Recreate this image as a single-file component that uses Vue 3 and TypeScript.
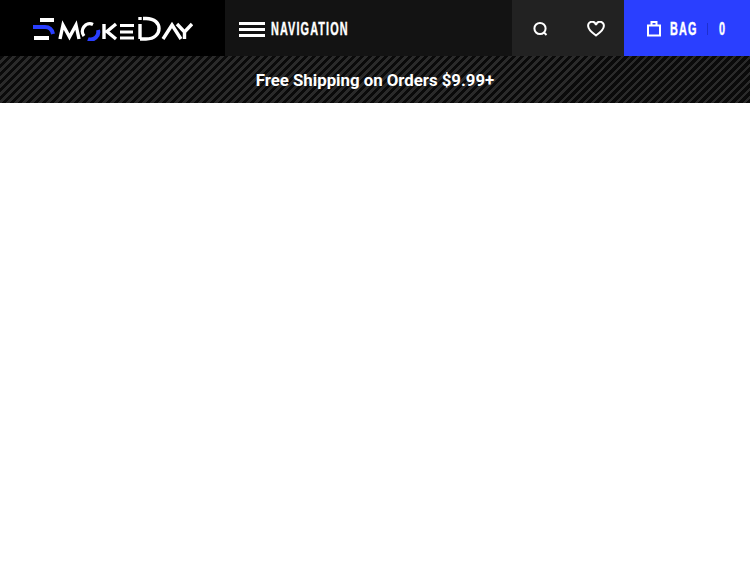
<script setup lang="ts">
const bagCount = 0
</script>

<template>
  <div class="page">
    <header class="topbar">
      <a class="logo" href="#" aria-label="SmokeDay">
        <svg width="160" height="25" viewBox="0 0 160 25" fill="none" stroke="#fff" stroke-width="3.400">
          <path d="M7 4h14" stroke-width="4" />
          <path d="M0 11h12c4 0 7 2 8 7" stroke="#2a3fff" stroke-width="4" />
          <path d="M1 22h15" stroke-width="4" />
          <path d="M27 23l3-14 6.500 12 6.500-12 3 14" />
          <path d="M51 20A7.500 7.500 0 0 1 60 8.500" />
          <path d="M65 14A7.500 7.500 0 0 1 55 23" stroke="#2a3fff" stroke-width="4" />
          <path d="M71 8v15M83 8l-9 7.500 9 7.500" />
          <path d="M87 9.500h14M87 16h13M87 22h14" stroke-width="2.800" />
          <path d="M107 8v15M107 1v3" />
          <path d="M110 2.500h3c9 0 13 5 13 10s-4 10.500-13 10.500h-6" />
          <path d="M130 23l9-14 9 14" />
          <path d="M144 8l7.500 8 7.500-8M151.500 16v7" />
        </svg>
      </a>
      <button class="nav-toggle" type="button">
        <span class="burger"><i></i><i></i><i></i></span>
        <span class="nav-label">NAVIGATION</span>
      </button>
      <div class="icon-group">
        <button class="icon-btn" type="button" aria-label="Search">
          <svg width="16" height="16" viewBox="0 0 16 16" fill="none" stroke="#fff" stroke-width="2">
            <circle cx="8" cy="7.500" r="5.600" />
            <path d="M12 11.500l2.500 2.500" />
          </svg>
        </button>
        <button class="icon-btn" type="button" aria-label="Wishlist">
          <svg width="18" height="16" viewBox="0 0 18 16" fill="none" stroke="#fff" stroke-width="2">
            <path d="M9 14.500C4 11 1.200 8.500 1.200 5.300a3.900 3.900 0 0 1 7.800-1.300 3.900 3.900 0 0 1 7.800 1.300c0 3.200-2.800 5.700-7.800 9.200z" />
          </svg>
        </button>
      </div>
      <button class="bag" type="button">
        <svg class="bag-icon" width="14" height="16" viewBox="0 0 14 16" fill="none" stroke="#fff" stroke-width="2">
          <path d="M1 4.500h12v10H1z" />
          <path d="M4.500 4.500V1h5v3.500" />
        </svg>
        <span class="bag-label">BAG</span>
        <span class="bag-sep"></span>
        <span class="bag-count">{{ bagCount }}</span>
      </button>
    </header>
    <div class="promo">Free Shipping on Orders $9.99+</div>
  </div>
</template>

<style>
html, body { background: #fff; }
</style>

<style scoped>
.page { width: 750px; height: 563px; background: #fff; overflow: hidden; }

.topbar { display: flex; height: 56px; background: #131313; }

.logo {
  width: 225px;
  flex-shrink: 0;
  background: #000;
  display: flex;
  align-items: flex-start;
  padding: 16px 0 0 33px;
  box-sizing: border-box;
}

button {
  border: none;
  margin: 0;
  padding: 0;
  color: #fff;
  background: none;
  cursor: pointer;
}

.nav-toggle {
  flex: 1;
  display: flex;
  align-items: center;
  gap: 6px;
  padding: 2px 0 0 14px;
}

.burger { display: flex; flex-direction: column; gap: 3px; width: 26px; }
.burger i { display: block; height: 3px; background: #fff; }

/* no condensed face installed, so squeeze the bold sans */
.nav-label, .bag-label, .bag-count {
  display: inline-block;
  font-family: "Liberation Sans", sans-serif;
  font-weight: 700;
  font-size: 17.500px;
  line-height: 20px;
  letter-spacing: 1.800px;
  white-space: nowrap;
  -webkit-text-stroke: 0.400px #fff;
  transform: scaleX(0.62);
  transform-origin: left center;
}
.nav-label { width: 78px; }

.icon-group { display: flex; width: 112px; background: #222; }
.icon-btn { width: 56px; display: flex; align-items: center; justify-content: center; padding-top: 2px; }

.bag {
  width: 126px;
  background: #2a3fff;
  display: flex;
  align-items: center;
  padding: 2px 0 0 23px;
  box-sizing: border-box;
}
.bag-icon { flex-shrink: 0; }
.bag-label { margin-left: 9px; width: 26px; }
.bag-sep { width: 1px; height: 12px; background: #1e2fd0; margin: 0 11px; }
.bag-count { width: 8px; }

.promo {
  height: 47px;
  box-sizing: border-box;
  display: flex;
  align-items: center;
  justify-content: center;
  color: #fff;
  font-family: Roboto, sans-serif;
  font-weight: 700;
  font-size: 16.800px;
  background: repeating-linear-gradient(135deg, #0a0a0a 0, #0a0a0a 3.300px, #2a2a2a 3.300px, #2a2a2a 5.660px);
}
</style>
